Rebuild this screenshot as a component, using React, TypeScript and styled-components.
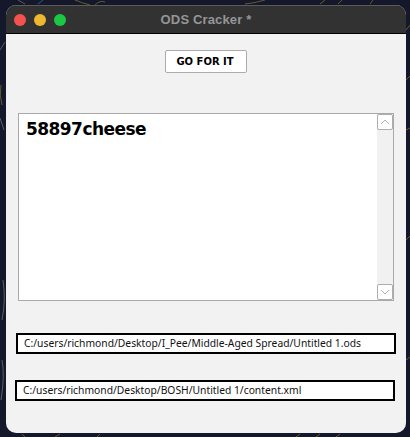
import React from "react";
import styled, { createGlobalStyle } from "styled-components";

const Global = createGlobalStyle`
  html, body { margin: 0; padding: 0; background: #14182a; }
  body { width: 410px; height: 437px; overflow: hidden; position: relative; }
`;

const Wallpaper = styled.svg`
  position: absolute;
  inset: 0;
  width: 410px;
  height: 437px;
`;

const Page = styled.div`
  position: relative;
  width: 410px;
  height: 437px;
  padding: 5px 4px 4px 6px;
  box-sizing: border-box;
`;

const Window = styled.div`
  height: 428px;
  width: 400px;
  border-radius: 10px;
  overflow: hidden;
  background: #f2f2f2;
  display: flex;
  flex-direction: column;
`;

const TitleBar = styled.header`
  height: 27px;
  flex: none;
  background: #323232;
  border-top: 1px solid #5a5a5a;
  border-bottom: 1px solid #000;
  box-sizing: content-box;
  display: flex;
  align-items: center;
  position: relative;
`;

const Lights = styled.div`
  display: flex;
  gap: 8px;
  padding-left: 8px;
`;

const Light = styled.span<{ $color: string }>`
  width: 12px;
  height: 12px;
  border-radius: 50%;
  background: ${(p) => p.$color};
`;

const Title = styled.div`
  position: absolute;
  left: 0;
  right: 0;
  text-align: center;
  font: bold 13px "Liberation Sans", Arial, sans-serif;
  letter-spacing: 0.15px;
  color: #969696;
`;

const Body = styled.main`
  flex: 1;
  display: flex;
  flex-direction: column;
  align-items: flex-start;
  padding-top: 16px;
`;

const GoButton = styled.button`
  align-self: center;
  width: 82px;
  height: 23px;
  box-sizing: border-box;
  padding: 0 2px 0 0;
  background: #fff;
  border: 1px solid #acacac;
  border-radius: 2px;
  font: bold 10px "DejaVu Sans", Tahoma, sans-serif;
  color: #000;
`;

const TextPanel = styled.section`
  margin: 40px 0 0 12px;
  width: 376px;
  height: 188px;
  box-sizing: border-box;
  border: 1px solid #a9a9a9;
  background: #fff;
  display: flex;
`;

const TextContent = styled.div`
  flex: 1;
  padding: 3px 7px;
  font: bold 17px "DejaVu Sans", Tahoma, sans-serif;
  letter-spacing: -0.55px;
  line-height: 24px;
  color: #000;
`;

const ScrollTrack = styled.div`
  width: 16px;
  background: #f1f1f1;
  display: flex;
  flex-direction: column;
  justify-content: space-between;
`;

const ScrollButton = styled.div`
  width: 16px;
  height: 16px;
  box-sizing: border-box;
  background: #fff;
  border: 1px solid #adadad;
  border-radius: 2px;
  display: flex;
  align-items: center;
  justify-content: center;
`;

const PathField = styled.div<{ $left: number; $top: number }>`
  margin: ${(p) => p.$top}px 0 0 ${(p) => p.$left}px;
  width: 380px;
  height: 21px;
  box-sizing: border-box;
  border: 2px solid #000;
  background: #fff;
  padding-left: 6px;
  font: 10.3px/17px "Noto Sans", Tahoma, sans-serif;
  color: #111;
  white-space: nowrap;
`;

const Chevron = ({ up }: { up?: boolean }) => (
  <svg width="10" height="6" viewBox="0 0 10 6" fill="none">
    <path d={up ? "M1 5 L5 1 L9 5" : "M1 1 L5 5 L9 1"} stroke="#b5b5b5" strokeWidth="1" />
  </svg>
);

export default function App() {
  return (
    <>
      <Global />
      <Wallpaper viewBox="0 0 410 437" fill="none">
        <g stroke="#7d6a35" strokeWidth="0.8">
          <path d="M75 0 Q82 3 90 5M95 5 Q100 0 105 2M245 4 Q255 3 265 0M320 4 L325 0M338 4 L342 0M370 4 L373 0M406 30 L410 25M406 80 L410 76M406 130 L410 128M406 240 L410 236M406 360 L410 357M1 85 Q-1 95 2 105M22 434 L25 437M60 434 L55 437M100 434 L97 437M300 434 L296 437M320 434 L316 437M340 434 L336 437M375 432 Q390 432 406 425" />
        </g>
        <g stroke="#6b6f7c" strokeWidth="0.8">
          <path d="M18 0 L25 4M0 50 L5 42M0 118 L4 130M3 280 Q6 300 2 320M2 360 Q5 375 1 400" />
        </g>
        <path d="M43 0 L38 4" stroke="#2d5a8c" strokeWidth="1" />
      </Wallpaper>
      <Page>
        <Window>
          <TitleBar>
            <Lights>
              <Light $color="#f4524f" />
              <Light $color="#edb82f" />
              <Light $color="#1cc744" />
            </Lights>
            <Title>ODS Cracker *</Title>
          </TitleBar>
          <Body>
            <GoButton>GO FOR IT</GoButton>
            <TextPanel>
              <TextContent>58897cheese</TextContent>
              <ScrollTrack>
                <ScrollButton><Chevron up /></ScrollButton>
                <ScrollButton><Chevron /></ScrollButton>
              </ScrollTrack>
            </TextPanel>
            <PathField $left={10} $top={32}>C:/users/richmond/Desktop/I_Pee/Middle-Aged Spread/Untitled 1.ods</PathField>
            <PathField $left={9} $top={26}>C:/users/richmond/Desktop/BOSH/Untitled 1/content.xml</PathField>
          </Body>
        </Window>
      </Page>
    </>
  );
}
